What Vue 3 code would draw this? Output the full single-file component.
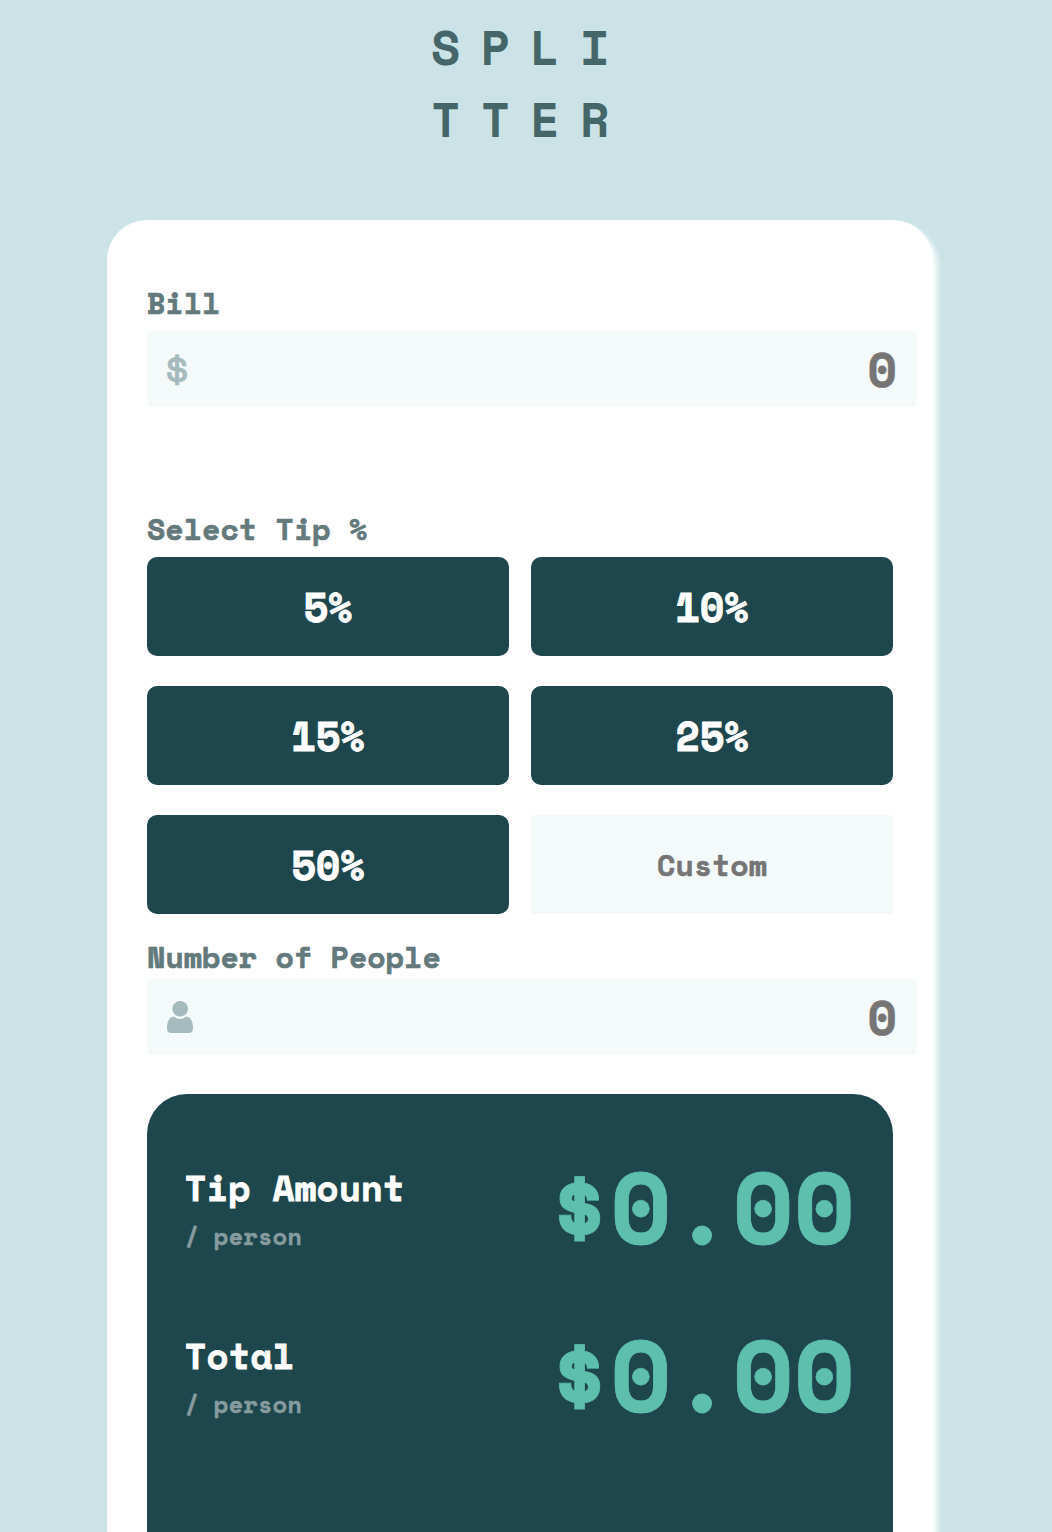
<script setup>
import { ref } from 'vue'

const tips = [5, 10, 15, 25, 50]
const bill = ref('')
const people = ref('')
const custom = ref('')
const results = [
  { label: 'Tip Amount', value: '$0.00' },
  { label: 'Total', value: '$0.00' },
]
</script>

<template>
  <div class="page">
    <h1 class="logo"><span>SPLI</span><span>TTER</span></h1>
    <main class="card">
      <label class="label bill-label">Bill</label>
      <div class="field">
        <span class="dollar">$</span>
        <input v-model="bill" class="amount" placeholder="0" />
      </div>

      <p class="label tip-label">Select Tip %</p>
      <div class="tips">
        <button v-for="tip in tips" :key="tip" class="tip">{{ tip }}%</button>
        <input v-model="custom" class="custom" placeholder="Custom" />
      </div>

      <label class="label people-label">Number of People</label>
      <div class="field">
        <svg class="person" viewBox="0 0 26 32" width="26" height="32">
          <circle cx="13.2" cy="7.8" r="7.8" />
          <path d="M7 15.8C3 15.3 0 20 0 27.2C0 30.6 1.8 32 5 32H21C24.2 32 26 30.6 26 27.2C26 20 23 15.3 19 15.8C17.2 17.2 15.3 18 13 18C10.7 18 8.8 17.2 7 15.8Z" />
        </svg>
        <input v-model="people" class="amount" placeholder="0" />
      </div>

      <section class="results">
        <div v-for="row in results" :key="row.label" class="row">
          <div>
            <p class="row-title">{{ row.label }}</p>
            <p class="row-sub">/ person</p>
          </div>
          <p class="total">{{ row.value }}</p>
        </div>
      </section>
    </main>
  </div>
</template>

<style>
body {
  margin: 0;
  background: #cbe3e6;
}
</style>

<style scoped>
.page {
  box-sizing: border-box;
  width: 1052px;
  height: 1532px;
  overflow: hidden;
  padding-top: 11px;
  background: #cbe3e6;
  font-family: "Space Mono", "DejaVu Sans Mono", monospace;
  font-weight: 700;
}
p, h1 { margin: 0; }
input, button {
  box-sizing: border-box;
  border: 0;
  outline: 0;
  padding: 0;
  margin: 0;
  font-family: inherit;
  font-weight: 700;
}
.logo {
  display: flex;
  flex-direction: column;
  height: 209px;
  padding-left: 431px;
  font-size: 48px;
  line-height: 72px;
  letter-spacing: 20.3px;
  color: #456668;
}
.card {
  box-sizing: border-box;
  width: 826px;
  height: 1400px;
  margin-left: 107px;
  padding: 65px 40px 0;
  border-radius: 40px;
  background: #fff;
  box-shadow: 5px 5px 5px #f4f9fa;
}
.label {
  display: block;
  height: 36px;
  font-size: 30px;
  line-height: 36px;
  color: #63797b;
  -webkit-text-stroke: 0.6px #63797b;
}
.bill-label { margin-bottom: 10px; }
.tip-label { margin: 105px 0 10px; }
.people-label { margin: 25px 0 4px; }
.field {
  box-sizing: border-box;
  display: flex;
  align-items: center;
  width: 770px;
  height: 75px;
  padding: 0 20px;
  border-radius: 4px;
  background: #f4f9fa;
}
.dollar {
  width: 26px;
  margin-left: -4px;
  font-size: 47px;
  font-weight: 400;
  line-height: 75px;
  color: #a5babd;
  -webkit-text-stroke: 0.6px #a5babd;
}
.person { fill: #a5babd; }
.amount {
  flex: 1;
  min-width: 0;
  height: 75px;
  background: transparent;
  font-size: 48px;
  text-align: right;
}
.amount::placeholder, .custom::placeholder {
  color: #757575;
  opacity: 1;
  -webkit-text-stroke: 0.5px #757575;
}
.tips {
  display: grid;
  grid-template-columns: 362px 362px;
  grid-auto-rows: 99px;
  gap: 30px 22px;
}
.tip {
  border-radius: 10px;
  background: #1e474d;
  color: #fff;
  font-size: 40px;
  line-height: 99px;
  -webkit-text-stroke: 0.8px #fff;
}
.custom {
  width: 362px;
  height: 99px;
  border-radius: 4px;
  background: #f4f9fa;
  font-size: 30px;
  text-align: center;
}
.results {
  box-sizing: border-box;
  height: 500px;
  margin-top: 40px;
  padding: 66px 38px 0 38px;
  border-radius: 40px;
  background: #1e474d;
}
.row {
  display: flex;
  justify-content: space-between;
  height: 168px;
}
.row-title {
  margin-left: -0.6px;
  font-size: 36px;
  line-height: 56px;
  color: #fff;
  -webkit-text-stroke: 0.8px #fff;
}
.row-sub {
  margin-left: -0.6px;
  font-size: 24px;
  line-height: 40px;
  color: #869b9e;
  -webkit-text-stroke: 0.4px #869b9e;
}
.total {
  height: 100px;
  font-size: 100px;
  line-height: 93px;
  color: #5ebfad;
  -webkit-text-stroke: 0.8px #5ebfad;
}
</style>
